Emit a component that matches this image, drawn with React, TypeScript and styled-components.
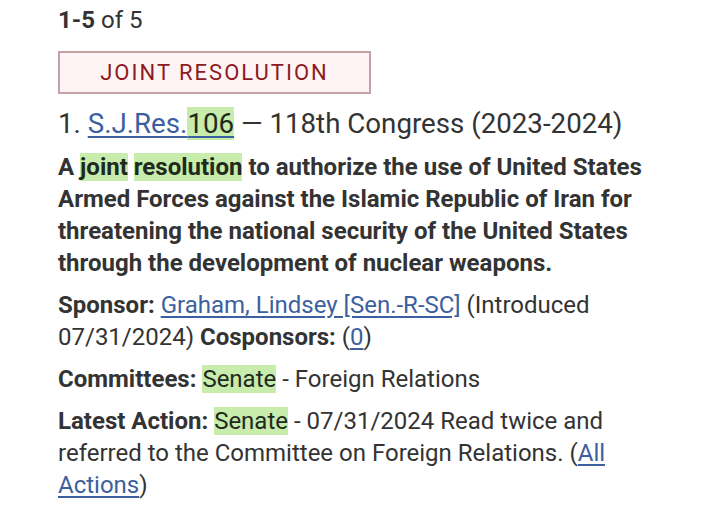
import React from "react";
import styled, { createGlobalStyle } from "styled-components";

const Global = createGlobalStyle`
  html, body { margin: 0; padding: 0; background: #ffffff; }
  body { font-family: Roboto, "Liberation Sans", Arial, sans-serif; color: #333333; }
`;

const Page = styled.div`
  padding: 4px 40px 0 58px;
  display: flex;
  flex-direction: column;
  align-items: flex-start;
`;

const Count = styled.div`
  font-size: 24px;
  line-height: 32px;
`;

const Tag = styled.div`
  margin-top: 15px;
  width: 313px;
  height: 43px;
  box-sizing: border-box;
  border: 2px solid #c4a3a7;
  background: #fff4f5;
  color: #8c1a22;
  font-size: 22px;
  letter-spacing: 2px;
  display: flex;
  align-items: center;
  justify-content: center;
`;

const Heading = styled.div`
  margin-top: 14px;
  font-size: 27.7px;
  line-height: 32px;
`;

const Link = styled.a`
  color: #3c5fa0;
  text-decoration: underline;
  text-underline-offset: 3px;
`;

const Mark = styled.span`
  background: #c8ecab;
  color: #1f2a1f;
`;

const Title = styled.div`
  margin-top: 11px;
  font-size: 24px;
  line-height: 32px;
  font-weight: 700;
`;

const Meta = styled.div`
  margin-top: 10px;
  font-size: 24px;
  line-height: 32px;
`;

const Label = styled.b`
  font-weight: 700;
`;

export default function App() {
  return (
    <>
      <Global />
      <Page>
        <Count>
          <b>1-5</b> of 5
        </Count>
        <Tag>JOINT RESOLUTION</Tag>
        <Heading>
          1. <Link href="#">S.J.Res.<Mark>106</Mark></Link> — 118th Congress (2023-2024)
        </Heading>
        <Title>
          A <Mark>joint</Mark> <Mark>resolution</Mark> to authorize the use of United States Armed
          Forces against the Islamic Republic of Iran for threatening the national security of the
          United States through the development of nuclear weapons.
        </Title>
        <Meta>
          <Label>Sponsor:</Label> <Link href="#">Graham, Lindsey [Sen.-R-SC]</Link> (Introduced
          07/31/2024) <Label>Cosponsors:</Label> (<Link href="#">0</Link>)
        </Meta>
        <Meta>
          <Label>Committees:</Label> <Mark>Senate</Mark> - Foreign Relations
        </Meta>
        <Meta>
          <Label>Latest Action:</Label> <Mark>Senate</Mark> - 07/31/2024 Read twice and referred to
          the Committee on Foreign Relations. (<Link href="#">All Actions</Link>)
        </Meta>
      </Page>
    </>
  );
}
